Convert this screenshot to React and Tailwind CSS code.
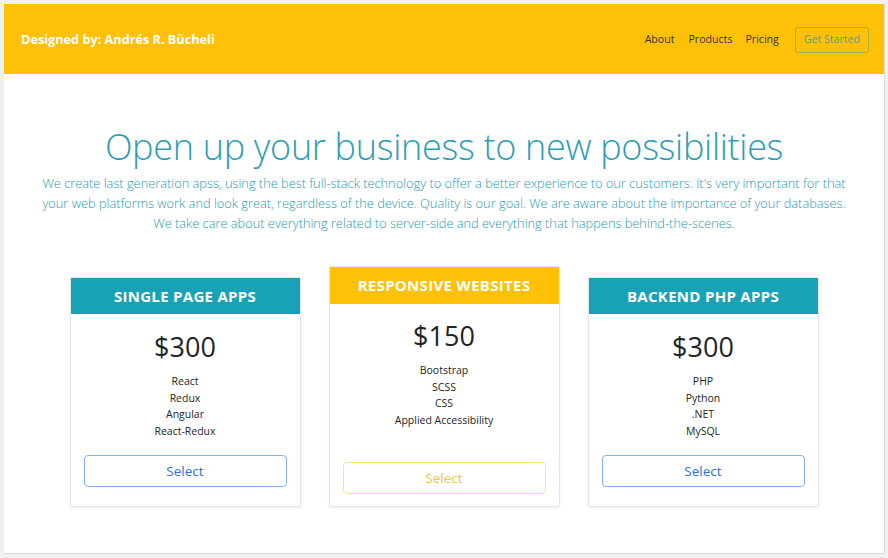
import React from 'react';

const FONT = { fontFamily: '"Open Sans", "Noto Sans", sans-serif' };

const PLANS = [
  {
    title: 'Single Page Apps',
    price: '$300',
    items: ['React', 'Redux', 'Angular', 'React-Redux'],
    featured: false,
  },
  {
    title: 'Responsive Websites',
    price: '$150',
    items: ['Bootstrap', 'SCSS', 'CSS', 'Applied Accessibility'],
    featured: true,
  },
  {
    title: 'Backend PHP Apps',
    price: '$300',
    items: ['PHP', 'Python', '.NET', 'MySQL'],
    featured: false,
  },
];

function PlanCard({ plan }) {
  const { title, price, items, featured } = plan;
  return (
    <div
      className={
        'w-[231px] flex flex-col bg-white border border-[#e6e6e6] rounded-[2px] shadow-[0_1px_3px_rgba(0,0,0,0.08)] ' +
        (featured ? 'h-[241px]' : 'h-[230px]')
      }
    >
      <div
        className={
          'flex items-center justify-center text-white font-bold uppercase text-[15px] tracking-[0.3px] ' +
          (featured ? 'h-[37px] bg-[#ffc107]' : 'h-[36px] bg-[#17a2b8]')
        }
      >
        {title}
      </div>
      <div className={'flex flex-col flex-1 px-[13px] ' + (featured ? 'pt-[14px] pb-[12px]' : 'pt-[15px] pb-[19px]')}>
        <div className="text-center text-[27px] leading-[36px] text-[#212529]">{price}</div>
        <ul className="mt-[8px] text-center text-[10.5px] leading-[16.5px] text-[#212529]">
          {items.map((it) => (
            <li key={it}>{it}</li>
          ))}
        </ul>
        <button
          className={
            'mt-auto h-[32px] w-full rounded-[4px] border text-[13.5px] ' +
            (featured
              ? 'border-[#ffe08a] text-[#f5c242]'
              : 'border-[#7fb2ee] text-[#2b73d6]')
          }
        >
          Select
        </button>
      </div>
    </div>
  );
}

export default function App() {
  return (
    <div className="w-[888px] h-[558px] bg-[#f0f0f0] pt-[4px] pl-[4px]" style={FONT}>
      <div className="w-[881px] h-[550px] bg-white border-r border-b border-[#dcdcdc] flex flex-col">
        <header className="h-[70px] bg-[#ffc107] flex items-center justify-between pt-[2px] pl-[17px] pr-[15px]">
          <span className="text-white font-bold text-[12.7px]">Designed by: Andrés R. Bücheli</span>
          <nav className="flex items-center text-[10.6px] text-[#333]">
            <a className="mr-[14px]">About</a>
            <a className="mr-[13px]">Products</a>
            <a className="mr-[16px]">Pricing</a>
            <button className="h-[26px] px-[8px] rounded-[3px] border border-[#a9ae3e] text-[#4fa384] text-[10.6px]">
              Get Started
            </button>
          </nav>
        </header>

        <main className="flex flex-col items-center pt-[50px]">
          <h1 className="text-[36px] leading-[46px] font-light text-[#2d9db6] tracking-[-0.3px]">
            Open up your business to new possibilities
          </h1>
          <p className="mt-[3px] text-center text-[12.8px] leading-[20px] font-light text-[#2a9ab3]">
            We create last generation apss, using the best full-stack technology to offer a better experience to our customers. It's very important for that
            <br />
            your web platforms work and look great, regardless of the device. Quality is our goal. We are aware about the importance of your databases.
            <br />
            We take care about everything related to server-side and everything that happens behind-the-scenes.
          </p>

          <div className="mt-[33px] flex items-end gap-[28px]">
            {PLANS.map((p) => (
              <PlanCard key={p.title} plan={p} />
            ))}
          </div>
        </main>
      </div>
    </div>
  );
}
